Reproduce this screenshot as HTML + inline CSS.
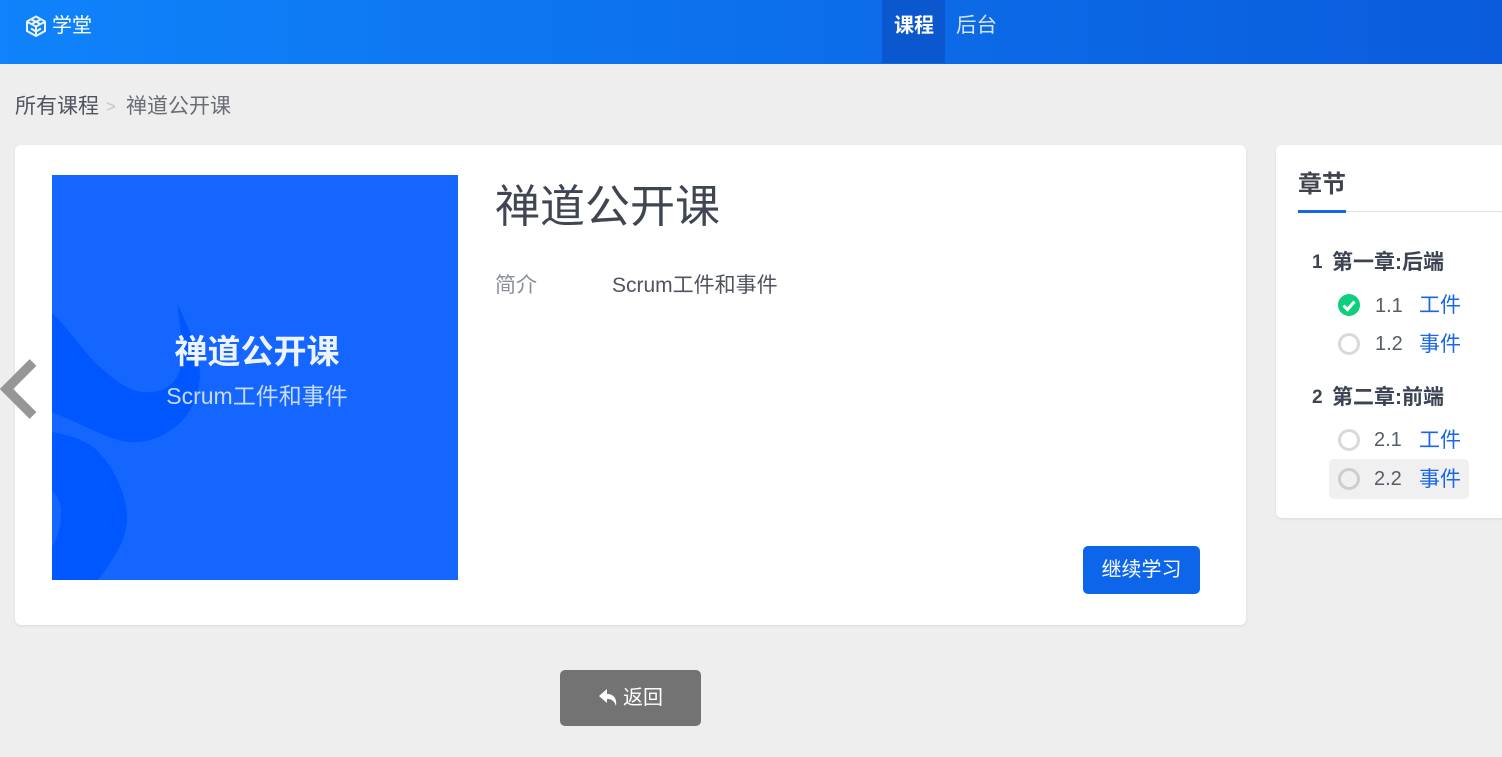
<!DOCTYPE html>
<html lang="zh">
<head>
<meta charset="utf-8">
<title>学堂</title>
<style>
*{box-sizing:border-box}
html,body{margin:0;padding:0}
body{width:1502px;height:757px;overflow:hidden;position:relative;background:#eee;font-family:"Liberation Sans","Noto Sans CJK SC",sans-serif;color:#3c4353}
.a{position:absolute;white-space:nowrap}
#hd{left:0;top:0;width:1502px;height:64px;background:linear-gradient(90deg,#0f83fb 0%,#0a5cdc 100%)}
#act{left:882px;top:0;width:63px;height:63px;background:#0b57cd}
.card{position:absolute;background:#fff;border-radius:6px;box-shadow:0 1px 3px rgba(0,0,0,.08)}
.ci{position:absolute;left:1338px;width:22px;height:22px;border:3px solid #d9d9d9;border-radius:50%;background:transparent}
.n{font-size:20px;color:#555c6a;line-height:24px}
.l{font-size:21px;color:#1a66e8;line-height:24px}
.h{font-size:21px;font-weight:700;color:#3c4353;line-height:24px}
.hn{font-size:19px;font-weight:700;color:#3c4353;line-height:24px}
</style>
</head>
<body>
<div class="a" id="hd"></div>
<div class="a" id="act"></div>
<svg class="a" style="left:25px;top:15px" width="22" height="22" viewBox="0 0 22 22" fill="none" stroke="#eaf3ff" stroke-width="2" stroke-linejoin="round"><path d="M11 1.500 20 6.500V16L11 21 2 16V6.500Z"/><path d="M2.500 7 11 11.500 19.500 7M11 11.500V20.500M6.500 4.500 15.500 9M15.500 4.500 6.500 9M6 13.500 11 16.500 16 13.500"/></svg>
<div class="a" style="left:52px;top:13px;font-size:20px;line-height:26px;color:#fff">学堂</div>
<div class="a" style="left:894px;top:13px;font-size:20px;line-height:26px;color:#fff;font-weight:700">课程</div>
<div class="a" style="left:956px;top:13px;font-size:20.500px;line-height:26px;color:#d5e4fb">后台</div>

<div class="a" style="left:15px;top:93px;font-size:21px;line-height:27px;color:#50545e">所有课程</div>
<div class="a" style="left:106px;top:94px;font-size:17px;line-height:26px;color:#c4c4c4">&gt;</div>
<div class="a" style="left:126px;top:93px;font-size:21px;line-height:27px;color:#6a6d75">禅道公开课</div>

<div class="card" style="left:15px;top:145px;width:1231px;height:480px"></div>
<div class="card" style="left:1276px;top:145px;width:240px;height:373px"></div>

<svg class="a" style="left:52px;top:175px" width="406" height="405" viewBox="0 0 406 405">
<rect width="406" height="405" fill="#1566ff"/>
<path d="M0 138C18 155 32 178 48 192C62 205 76 216 92 217C110 218 122 212 128 195C131 175 128 150 125 128C135 150 148 175 148 202C146 225 136 243 122 253C108 263 94 268 78 267C60 266 40 254 0 237Z" fill="#0057ff"/>
<path d="M0 257C16 260 30 264 41 272C56 284 72 310 75 338C76 360 68 372 60 385C54 394 50 400 46 405H0Z" fill="#0057ff"/>
<path d="M0 315C6 322 10 330 9 340C9 352 5 364 0 372Z" fill="#1566ff"/>
<text x="205" y="188" text-anchor="middle" font-size="33" font-weight="700" fill="#eef4ff" font-family="'Liberation Sans','Noto Sans CJK SC',sans-serif">禅道公开课</text>
<text x="205" y="229" text-anchor="middle" font-size="23" fill="#c6dbff" font-family="'Liberation Sans','Noto Sans CJK SC',sans-serif">Scrum工件和事件</text>
</svg>

<svg class="a" style="left:0;top:359px" width="38" height="60" viewBox="0 0 38 60"><path d="M33 3.500 6.500 30 33 56.500" fill="none" stroke="#969696" stroke-width="9.500"/></svg>

<div class="a" style="left:495px;top:176px;font-size:45px;line-height:62px;color:#3f4553">禅道公开课</div>
<div class="a" style="left:495px;top:273px;font-size:21px;line-height:26px;color:#8a8f99">简介</div>
<div class="a" style="left:612px;top:273px;font-size:21px;line-height:26px;color:#50545e">Scrum工件和事件</div>

<div class="a" style="left:1083px;top:546px;width:117px;height:48px;border-radius:5px;background:#0d65ea;color:#fff;font-size:20px;line-height:49px;text-align:center">继续学习</div>
<div class="a" style="left:560px;top:670px;width:141px;height:56px;border-radius:5px;background:#737373"></div>
<svg class="a" style="left:598px;top:688px" width="21" height="20" viewBox="0 0 21 20"><path d="M9 1 1 8l8 7v-4c4 0 7 1 9 7 1-7-2-12-9-12Z" fill="#fff"/></svg>
<div class="a" style="left:623px;top:685px;font-size:20px;line-height:26px;color:#fff">返回</div>

<div class="a" style="left:1298px;top:169px;font-size:24px;font-weight:700;line-height:31px;color:#40434d">章节</div>
<div class="a" style="left:1298px;top:210.500px;width:204px;height:1.500px;background:#e2e2e2"></div>
<div class="a" style="left:1298px;top:209.500px;width:48px;height:3px;background:#1465ea"></div>

<div class="a hn" style="left:1312px;top:251px">1</div>
<div class="a h" style="left:1332px;top:251px">第一章:后端</div>
<svg class="a" style="left:1338px;top:294px" width="22" height="22" viewBox="0 0 22 22"><circle cx="11" cy="11" r="11" fill="#0fcf7c"/><path d="M5.500 11.500 9.500 15.500 16.500 7.500" fill="none" stroke="#fff" stroke-width="3"/></svg>
<div class="a n" style="left:1375px;top:294px">1.1</div>
<div class="a l" style="left:1419px;top:294px">工件</div>
<div class="ci" style="top:333px"></div>
<div class="a n" style="left:1375px;top:332px">1.2</div>
<div class="a l" style="left:1419px;top:333px">事件</div>

<div class="a hn" style="left:1312px;top:386px">2</div>
<div class="a h" style="left:1332px;top:386px">第二章:前端</div>
<div class="ci" style="top:429px"></div>
<div class="a n" style="left:1374px;top:428px">2.1</div>
<div class="a l" style="left:1419px;top:429px">工件</div>
<div class="a" style="left:1329px;top:459px;width:140px;height:40px;border-radius:5px;background:#f0f0f0"></div>
<div class="ci" style="top:468px;border-color:#cdcdcd"></div>
<div class="a n" style="left:1374px;top:467px">2.2</div>
<div class="a l" style="left:1419px;top:468px">事件</div>
</body>
</html>
